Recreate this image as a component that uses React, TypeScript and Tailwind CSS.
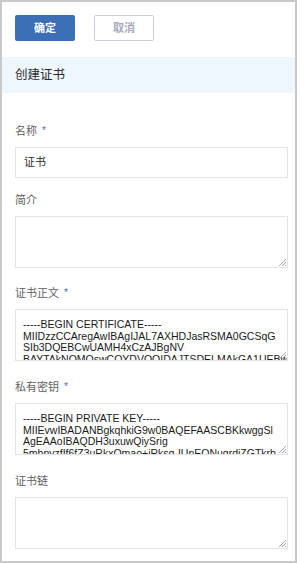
import React from "react";

const Grip = () => (
  <svg className="absolute right-[1px] bottom-[1px]" width="8" height="8" viewBox="0 0 8 8">
    <line x1="1" y1="8" x2="8" y2="1" stroke="#a8a8a8" strokeWidth="1" />
    <line x1="4" y1="8" x2="8" y2="4" stroke="#a8a8a8" strokeWidth="1" />
    <line x1="7" y1="8" x2="8" y2="7" stroke="#a8a8a8" strokeWidth="1" />
  </svg>
);

const Label = ({ text, required }: { text: string; required?: boolean }) => (
  <div className="h-4 leading-4 text-[11px] text-[#5f5f5f] mb-2 flex items-center">
    <span>{text}</span>
    {required && <span className="ml-[5px] text-[#3d6fb6] text-[10px] leading-4">*</span>}
  </div>
);

const Area = ({ lines }: { lines?: string[] }) => (
  <div className="relative h-[52px] w-[273px] border border-[#e1e5eb] bg-white overflow-hidden">
    {lines && (
      <div className="pl-[7px] pt-[9px] text-[10.5px] leading-[11.5px] text-[#1a1a1a] whitespace-nowrap font-['Liberation_Sans',Arial,sans-serif]">
        {lines.map((l, i) => (
          <div key={i}>{l}</div>
        ))}
      </div>
    )}
    <Grip />
  </div>
);

export default function App() {
  return (
    <div className="w-[300px] h-[563px] bg-white font-['Liberation_Sans','Noto_Sans_CJK_SC',sans-serif]">
      <div className="w-[297px] h-[563px] border-2 border-[#c9c9c9] overflow-hidden">
        <div className="flex gap-[19px] pl-[13px] pt-[13px] h-[55px]">
          <div className="w-[60px] h-[26px] rounded-[2px] bg-[#3d6fb6] text-white text-[11px] font-bold flex items-center justify-center">
            确定
          </div>
          <div className="w-[60px] h-[26px] rounded-[2px] border border-[#c9d0dc] text-[#a3abb8] text-[11px] font-bold flex items-center justify-center">
            取消
          </div>
        </div>
        <div className="h-9 bg-[#eff7fe] flex items-center pl-[13px] text-[12.5px] text-[#2a2a2a]">
          创建证书
        </div>
        <div className="pl-[13px] pr-[7px] pt-[30px]">
          <Label text="名称" required />
          <div className="h-[31px] w-[273px] border border-[#e1e5eb] flex items-center pl-[8px] text-[11px] text-[#2a2a2a]">
            证书
          </div>
          <div className="mt-[14px]">
            <Label text="简介" />
            <Area />
          </div>
          <div className="mt-[17px]">
            <Label text="证书正文" required />
            <Area
              lines={[
                "-----BEGIN CERTIFICATE-----",
                "MIIDzzCCAregAwIBAgIJAL7AXHDJasRSMA0GCSqG",
                "SIb3DQEBCwUAMH4xCzAJBgNV",
                "BAYTAkNOMQswCQYDVQQIDAJTSDELMAkGA1UEBwwC",
              ]}
            />
          </div>
          <div className="mt-[18px]">
            <Label text="私有密钥" required />
            <Area
              lines={[
                "-----BEGIN PRIVATE KEY-----",
                "MIIEvwIBADANBgkqhkiG9w0BAQEFAASCBKkwggSl",
                "AgEAAoIBAQDH3uxuwQiySrig",
                "5mbnvzfIf6fZ3uRkxQmao+jRksq-IUnEQNugrdiZGTkrb",
              ]}
            />
          </div>
          <div className="mt-[18px]">
            <Label text="证书链" />
            <Area />
          </div>
        </div>
      </div>
    </div>
  );
}
